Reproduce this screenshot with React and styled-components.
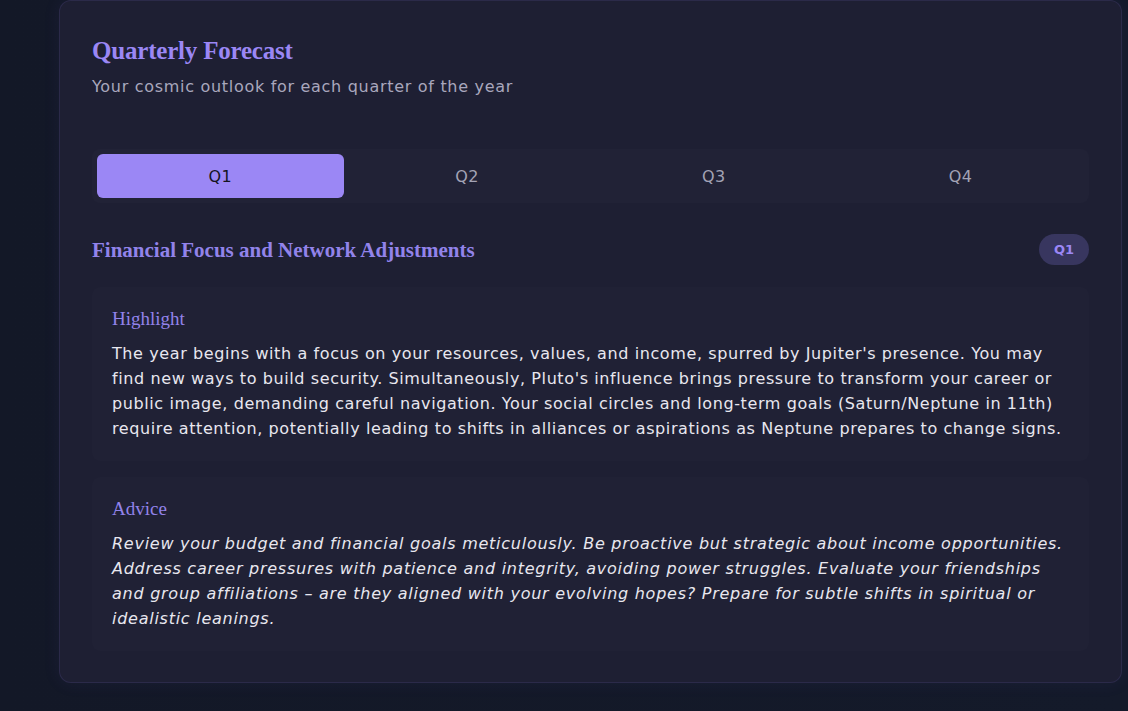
import React, { useState } from "react";
import styled, { createGlobalStyle } from "styled-components";

const GlobalStyle = createGlobalStyle`
  html, body {
    margin: 0;
    padding: 0;
    background: #121726;
  }
  body {
    font-family: "DejaVu Sans", "Noto Sans", sans-serif;
    overflow: hidden;
  }
`;

const forecasts = {
  Q1: {
    title: "Financial Focus and Network Adjustments",
    highlight:
      "The year begins with a focus on your resources, values, and income, spurred by Jupiter's presence. You may find new ways to build security. Simultaneously, Pluto's influence brings pressure to transform your career or public image, demanding careful navigation. Your social circles and long-term goals (Saturn/Neptune in 11th) require attention, potentially leading to shifts in alliances or aspirations as Neptune prepares to change signs.",
    advice:
      "Review your budget and financial goals meticulously. Be proactive but strategic about income opportunities. Address career pressures with patience and integrity, avoiding power struggles. Evaluate your friendships and group affiliations – are they aligned with your evolving hopes? Prepare for subtle shifts in spiritual or idealistic leanings.",
  },
};

const quarters = ["Q1", "Q2", "Q3", "Q4"];

export default function App() {
  const [active, setActive] = useState("Q1");
  const forecast = forecasts[active] || forecasts.Q1;

  return (
    <Page>
      <GlobalStyle />
      <Card>
        <Title>Quarterly Forecast</Title>
        <Subtitle>Your cosmic outlook for each quarter of the year</Subtitle>

        <TabList>
          {quarters.map((q) => (
            <Tab key={q} active={q === active} onClick={() => setActive(q)}>
              {q}
            </Tab>
          ))}
        </TabList>

        <SectionHead>
          <SectionTitle>{forecast.title}</SectionTitle>
          <Badge>{active}</Badge>
        </SectionHead>

        <Block>
          <BlockLabel>Highlight</BlockLabel>
          <BlockText>{forecast.highlight}</BlockText>
        </Block>

        <Block>
          <BlockLabel>Advice</BlockLabel>
          <BlockText italic>{forecast.advice}</BlockText>
        </Block>
      </Card>
    </Page>
  );
}

const Page = styled.div`
  min-height: 711px;
  box-sizing: border-box;
  padding: 0 6px 28px 59px;
  background: linear-gradient(90deg, #131827 0%, #141a2a 100%);
`;

const Card = styled.div`
  box-sizing: border-box;
  width: 1063px;
  background: #1e1f33;
  border: 1px solid rgba(139, 124, 240, 0.12);
  border-radius: 12px;
  padding: 34px 32px 31px;
  box-shadow: 0 0 18px rgba(110, 90, 220, 0.08);
`;

const Title = styled.h2`
  margin: 0;
  font-family: "Liberation Serif", "DejaVu Serif", serif;
  font-weight: 700;
  font-size: 25px;
  line-height: 32px;
  letter-spacing: -0.2px;
  color: #9b87f5;
`;

const Subtitle = styled.p`
  margin: 8px 0 0;
  font-size: 16px;
  line-height: 24px;
  letter-spacing: 0.7px;
  color: #a9a7bd;
`;

const TabList = styled.div`
  margin-top: 50px;
  display: grid;
  grid-template-columns: repeat(4, 1fr);
  padding: 5px;
  border-radius: 8px;
  background: rgba(255, 255, 255, 0.015);
`;

const Tab = styled.button`
  height: 44px;
  border: none;
  border-radius: 6px;
  font-family: "DejaVu Sans", sans-serif;
  font-size: 16px;
  font-weight: 500;
  letter-spacing: 0.5px;
  cursor: pointer;
  background: ${(p) => (p.active ? "#9b87f5" : "transparent")};
  color: ${(p) => (p.active ? "#15151f" : "#a3a3b5")};
`;

const SectionHead = styled.div`
  margin-top: 31px;
  display: flex;
  align-items: center;
  justify-content: space-between;
`;

const SectionTitle = styled.h3`
  margin: 0;
  font-family: "Liberation Serif", "DejaVu Serif", serif;
  font-weight: 700;
  font-size: 21px;
  line-height: 30px;
  color: #9283ea;
`;

const Badge = styled.span`
  display: inline-flex;
  align-items: center;
  justify-content: center;
  width: 50px;
  height: 31px;
  border-radius: 16px;
  background: #38365f;
  color: #9b87f5;
  font-size: 13px;
  font-weight: 700;
`;

const Block = styled.div`
  margin-top: 16px;
  padding: 20px;
  border-radius: 8px;
  background: rgba(255, 255, 255, 0.012);

  ${SectionHead} + & {
    margin-top: 22px;
  }
`;

const BlockLabel = styled.h4`
  margin: 0 0 10px;
  font-family: "Liberation Serif", "DejaVu Serif", serif;
  font-weight: 400;
  font-size: 19px;
  line-height: 24px;
  color: #9283ea;
`;

const BlockText = styled.p`
  margin: 0;
  font-size: 16px;
  line-height: 25px;
  letter-spacing: ${(p) => (p.italic ? "0.74px" : "0.6px")};
  color: #e8e7ef;
  font-style: ${(p) => (p.italic ? "italic" : "normal")};
`;
